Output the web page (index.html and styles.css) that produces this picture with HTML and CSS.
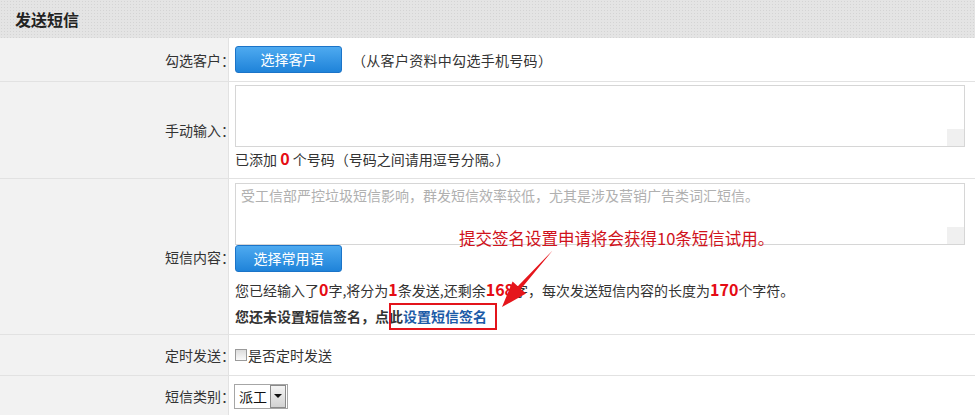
FILE: index.html
```html
<!DOCTYPE html>
<html lang="zh-CN">
<head>
  <meta charset="UTF-8">
  <meta name="viewport" content="width=device-width, initial-scale=1">
  <title>发送短信</title>
  <link rel="stylesheet" href="styles.css">
</head>
<body>
  <div class="page">
    <h2 class="title">发送短信</h2>

    <div class="form">
      <div class="row row-customer">
        <div class="label"><span>勾选客户：</span></div>
        <div class="field">
          <button class="btn">选择客户</button>
          <span class="hint">（从客户资料中勾选手机号码）</span>
        </div>
      </div>

      <div class="row row-manual">
        <div class="label"><span>手动输入：</span></div>
        <div class="field">
          <div class="area-wrap">
            <textarea class="area"></textarea>
          </div>
          <p class="line">已添加 <b class="num">0</b> 个号码（号码之间请用逗号分隔。）</p>
        </div>
      </div>

      <div class="row row-content">
        <div class="label"><span>短信内容：</span></div>
        <div class="field">
          <div class="area-wrap">
            <textarea class="area" placeholder="受工信部严控垃圾短信影响，群发短信效率较低，尤其是涉及营销广告类词汇短信。"></textarea>
          </div>
          <button class="btn">选择常用语</button>
          <p class="line count">您已经输入了<b class="num">0</b>字,将分为<b class="num">1</b>条发送,还剩余<b class="num">168</b>字，每次发送短信内容的长度为<b class="num">170</b>个字符。</p>
          <p class="line sign">您还未设置短信签名，点此<a href="#" class="sign-link">设置短信签名</a></p>
        </div>
      </div>

      <div class="row row-timer">
        <div class="label"><span>定时发送：</span></div>
        <div class="field">
          <label class="check"><input type="checkbox">是否定时发送</label>
        </div>
      </div>

      <div class="row row-type">
        <div class="label"><span>短信类别：</span></div>
        <div class="field">
          <div class="select">
            <span class="select-value">派工</span>
            <span class="select-btn"></span>
          </div>
        </div>
      </div>
    </div>

    <!-- annotation drawn over the form -->
    <div class="note">提交签名设置申请将会获得10条短信试用。</div>
    <div class="mark"></div>
    <svg class="arrow" width="975" height="415" viewBox="0 0 975 415">
      <polygon points="553.4,249.6 552.6,250.4 517.8,286.3 512.6,281.6 502,307 526,293.6 520.8,288.9" fill="#e5161c"/>
    </svg>
  </div>
</body>
</html>
```

FILE: styles.css
```css
body {
  margin: 0;
  padding: 0;
  background: #fff;
  font-family: "Noto Sans CJK SC", "Microsoft YaHei", sans-serif;
  font-size: 14px;
  line-height: 24px;
  color: #333;
}
.page {
  position: relative;
  width: 975px;
  height: 415px;
  overflow: hidden;
}
.title {
  margin: 0;
  height: 38px;
  padding-left: 15px;
  font-size: 16px;
  font-weight: bold;
  line-height: 38px;
  color: #222;
  background-color: #e4e4e4;
  background-image: radial-gradient(#d4d4d4 0.9px, transparent 1px);
  background-size: 3px 3px;
}
.row {
  display: grid;
  grid-template-columns: 229px 1fr;
  border-bottom: 1px solid #e2e2e2;
}
.label {
  display: flex;
  align-items: center;
  justify-content: flex-end;
  background: #f2f2f2;
  border-right: 1px solid #e2e2e2;
}
/* the colon sits left in its box; pull it over like the original */
.label span {
  margin-right: -7px;
}
.field {
  padding: 0 6px;
}
.row-customer .field {
  display: flex;
  align-items: center;
  padding-top: 8px;
  padding-bottom: 8px;
}
.row-manual .field {
  padding-top: 3px;
  padding-bottom: 7px;
}
.row-content .field {
  padding-top: 4px;
  padding-bottom: 5px;
}
.row-timer .field {
  height: 40px;
  display: flex;
  align-items: center;
}
.row-type .field {
  height: 40px;
  display: flex;
  align-items: center;
}
.btn {
  display: block;
  width: 107px;
  height: 27px;
  padding: 0;
  border: 1px solid #1b74c8;
  border-radius: 3px;
  background: linear-gradient(#4eaaf0, #1f83d9);
  color: #fff;
  font-family: inherit;
  font-size: 14px;
  line-height: 25px;
  cursor: pointer;
}
.hint {
  margin-left: 10px;
  letter-spacing: 0.3px;
}
.area-wrap {
  position: relative;
  width: 730px;
  height: 62px;
}
.area {
  display: block;
  box-sizing: border-box;
  width: 730px;
  height: 62px;
  margin: 0;
  padding: 0 5px;
  border: 1px solid #d6d6d6;
  resize: none;
  font-family: inherit;
  font-size: 14px;
  line-height: 22px;
  color: #333;
  outline: none;
}
.area::placeholder {
  color: #b0b0b0;
}
.area-wrap::after {
  content: "";
  position: absolute;
  right: 1px;
  bottom: 1px;
  width: 17px;
  height: 17px;
  background: #f0f0f0;
}
.line {
  margin: 0;
  height: 24px;
  line-height: 24px;
}
.row-content .btn {
  margin-bottom: 5px;
}
.row-content .line {
  height: 26px;
  line-height: 26px;
}
.num {
  color: #e50c14;
  font-size: 16px;
  font-weight: bold;
  line-height: 1;
}
.sign {
  font-weight: bold;
}
.sign-link {
  color: #1c5ba7;
  text-decoration: none;
}
.check {
  display: flex;
  align-items: center;
}
.check input {
  appearance: none;
  width: 12px;
  height: 12px;
  margin: 0 1px 0 0;
  border: 1px solid #9a9a9a;
  background: linear-gradient(#dcdcdc, #fafafa);
}
.select {
  display: flex;
  align-items: center;
  height: 25px;
  width: 54px;
  box-sizing: border-box;
  margin-left: -1px;
  border: 1px solid #a6a6a6;
  background: #fff;
}
.select-value {
  flex: 1;
  padding-left: 4px;
  color: #111;
  font-size: 14px;
}
.select-btn {
  position: relative;
  width: 14px;
  height: 21px;
  margin-right: 1px;
  border: 1px solid #8a8a8a;
  background: linear-gradient(#f4f4f4, #d2d2d2);
}
.select-btn::after {
  content: "";
  position: absolute;
  left: 3px;
  top: 8px;
  border-left: 4px solid transparent;
  border-right: 4px solid transparent;
  border-top: 4px solid #111;
}
.note {
  position: absolute;
  left: 459px;
  top: 227px;
  font-size: 16.5px;
  line-height: 22px;
  color: #d0121b;
  white-space: nowrap;
}
.mark {
  position: absolute;
  left: 389px;
  top: 303px;
  width: 104px;
  height: 23px;
  border: 2px solid #e3141b;
}
.arrow {
  position: absolute;
  left: 0;
  top: 0;
  pointer-events: none;
}
```
